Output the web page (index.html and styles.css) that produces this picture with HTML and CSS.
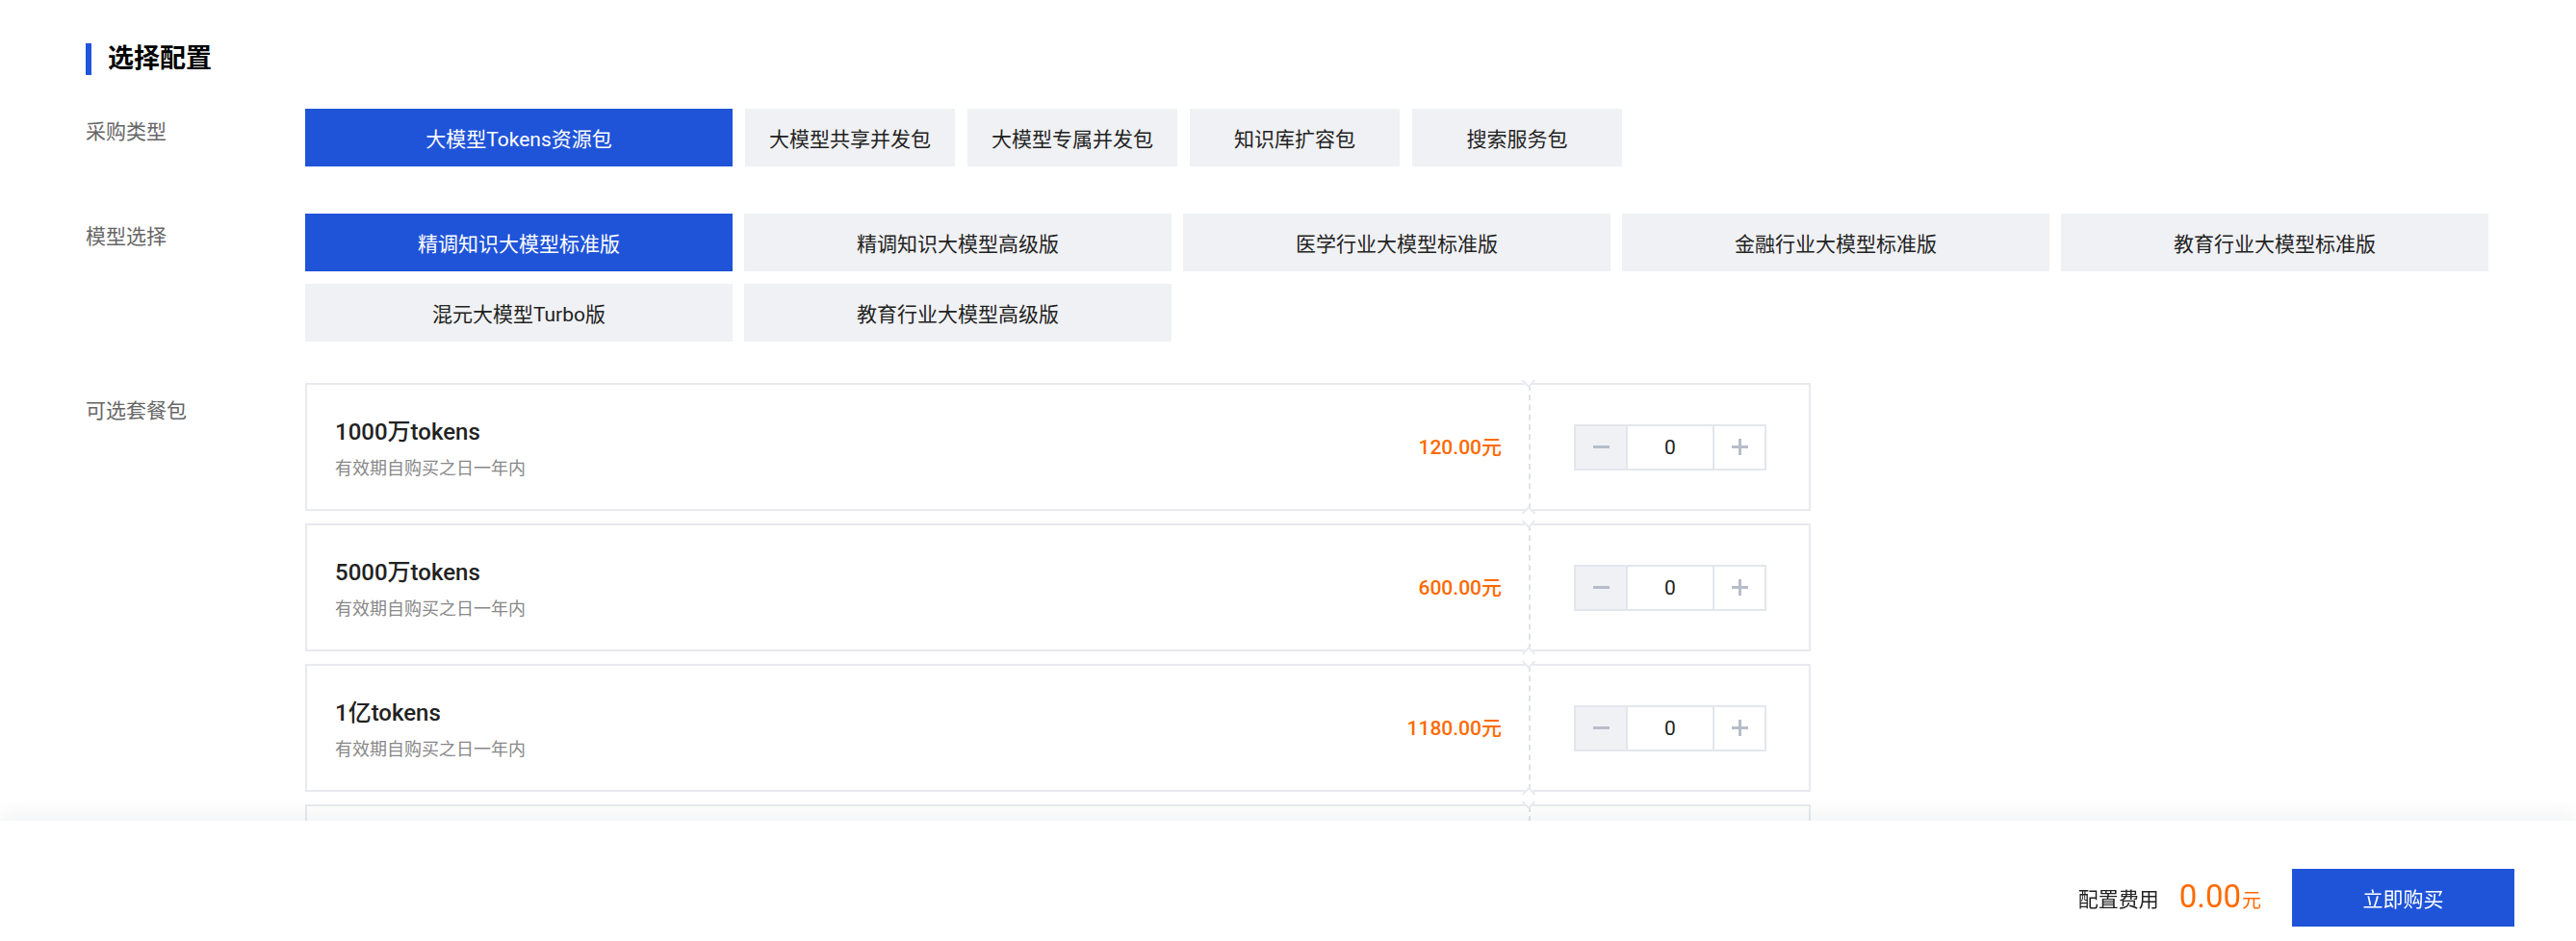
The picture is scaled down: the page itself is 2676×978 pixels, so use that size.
FILE: index.html
```html
<!DOCTYPE html>
<html lang="zh-CN">
<head>
<meta charset="utf-8">
<title>选择配置</title>
<link rel="stylesheet" href="styles.css">
</head>
<body>
<main class="page">
  <div class="section-title">
    <span class="title-bar"></span>
    <h2 class="title-text">选择配置</h2>
  </div>

  <div class="form-row row-type">
    <div class="row-label">采购类型</div>
    <div class="type-options">
      <button class="opt opt-wide is-active">大模型Tokens资源包</button>
      <button class="opt opt-narrow">大模型共享并发包</button>
      <button class="opt opt-narrow">大模型专属并发包</button>
      <button class="opt opt-narrow">知识库扩容包</button>
      <button class="opt opt-narrow">搜索服务包</button>
    </div>
  </div>

  <div class="form-row row-model">
    <div class="row-label">模型选择</div>
    <div class="model-grid">
      <button class="opt is-active">精调知识大模型标准版</button>
      <button class="opt">精调知识大模型高级版</button>
      <button class="opt">医学行业大模型标准版</button>
      <button class="opt">金融行业大模型标准版</button>
      <button class="opt">教育行业大模型标准版</button>
      <button class="opt">混元大模型Turbo版</button>
      <button class="opt">教育行业大模型高级版</button>
    </div>
  </div>

  <div class="form-row row-pkg">
    <div class="row-label label-pkg">可选套餐包</div>
    <div class="pkg-list">
      <div class="pkg-card">
        <div class="pkg-info">
          <div class="pkg-text">
            <div class="pkg-name">1000万tokens</div>
            <div class="pkg-desc">有效期自购买之日一年内</div>
          </div>
          <div class="pkg-price">120.00元</div>
        </div>
        <div class="pkg-qty">
          <div class="stepper">
            <span class="step-btn step-minus is-disabled"><span class="sign-minus"></span></span>
            <span class="step-val">0</span>
            <span class="step-btn step-plus"><span class="sign-plus"></span></span>
          </div>
        </div>
        <span class="notch notch-top"></span>
        <span class="notch notch-bottom"></span>
      </div>

      <div class="pkg-card">
        <div class="pkg-info">
          <div class="pkg-text">
            <div class="pkg-name">5000万tokens</div>
            <div class="pkg-desc">有效期自购买之日一年内</div>
          </div>
          <div class="pkg-price">600.00元</div>
        </div>
        <div class="pkg-qty">
          <div class="stepper">
            <span class="step-btn step-minus is-disabled"><span class="sign-minus"></span></span>
            <span class="step-val">0</span>
            <span class="step-btn step-plus"><span class="sign-plus"></span></span>
          </div>
        </div>
        <span class="notch notch-top"></span>
        <span class="notch notch-bottom"></span>
      </div>

      <div class="pkg-card">
        <div class="pkg-info">
          <div class="pkg-text">
            <div class="pkg-name">1亿tokens</div>
            <div class="pkg-desc">有效期自购买之日一年内</div>
          </div>
          <div class="pkg-price">1180.00元</div>
        </div>
        <div class="pkg-qty">
          <div class="stepper">
            <span class="step-btn step-minus is-disabled"><span class="sign-minus"></span></span>
            <span class="step-val">0</span>
            <span class="step-btn step-plus"><span class="sign-plus"></span></span>
          </div>
        </div>
        <span class="notch notch-top"></span>
        <span class="notch notch-bottom"></span>
      </div>

      <div class="pkg-card">
        <div class="pkg-info">
          <div class="pkg-text">
            <div class="pkg-name">10亿tokens</div>
            <div class="pkg-desc">有效期自购买之日一年内</div>
          </div>
          <div class="pkg-price">11000.00元</div>
        </div>
        <div class="pkg-qty">
          <div class="stepper">
            <span class="step-btn step-minus is-disabled"><span class="sign-minus"></span></span>
            <span class="step-val">0</span>
            <span class="step-btn step-plus"><span class="sign-plus"></span></span>
          </div>
        </div>
        <span class="notch notch-top"></span>
        <span class="notch notch-bottom"></span>
      </div>
    </div>
  </div>
</main>

<footer class="buy-bar">
  <span class="fee-label">配置费用</span>
  <span class="fee-price"><span class="fee-num">0.00</span><span class="fee-unit">元</span></span>
  <button class="buy-btn">立即购买</button>
</footer>
</body>
</html>
```

FILE: styles.css
```css
html, body {
  margin: 0;
  padding: 0;
  overflow: hidden;
  background: #ffffff;
}

body {
  font-family: Roboto, "Noto Sans CJK SC", sans-serif;
  color: #222222;
}

.page {
  padding: 45px 0 0 89px;
}

/* section title */
.section-title {
  display: flex;
  align-items: center;
  height: 33px;
}

.title-bar {
  width: 6px;
  height: 33px;
  background: #1f55da;
}

.title-text {
  margin: 0 0 0 17px;
  font-size: 27px;
  font-weight: 700;
  line-height: 33px;
  color: #000000;
}

/* form rows */
.form-row {
  display: flex;
  align-items: flex-start;
}

.row-type {
  margin-top: 35px;
}

.row-model {
  margin-top: 49px;
}

.row-pkg {
  margin-top: 44px;
}

.row-label {
  width: 228px;
  flex: none;
  font-size: 21px;
  line-height: 48px;
  color: #666666;
}

.label-pkg {
  padding-top: 4px;
}

/* option buttons */
.opt {
  height: 60px;
  border: none;
  margin: 0;
  padding: 0;
  background: #f0f1f4;
  color: #222222;
  font-family: Roboto, "Noto Sans CJK SC", sans-serif;
  font-size: 21px;
  cursor: pointer;
}

.opt.is-active {
  background: #1f54d9;
  color: #ffffff;
}

.type-options {
  display: flex;
  gap: 13px;
}

.opt-wide {
  width: 444px;
}

.opt-narrow {
  width: 218px;
}

.model-grid {
  display: grid;
  grid-template-columns: repeat(5, 444px);
  column-gap: 12px;
  row-gap: 13px;
}

/* package cards */
.pkg-list {
  display: flex;
  flex-direction: column;
  gap: 13px;
  margin-top: -1px;
}

.pkg-card {
  position: relative;
  display: flex;
  width: 1564px;
  height: 133px;
  box-sizing: border-box;
  border: 2px solid #e8eaef;
  background: #ffffff;
}

.pkg-info {
  width: 1271px;
  box-sizing: border-box;
  display: flex;
  align-items: center;
  justify-content: space-between;
  padding: 0 28px 0 29px;
  border-right: 2px dashed #dfe2e8;
}

.pkg-text {
  display: flex;
  flex-direction: column;
  padding-top: 3px;
}

.pkg-name {
  font-size: 24px;
  font-weight: 500;
  line-height: 32px;
  color: #222222;
}

.pkg-desc {
  margin-top: 9px;
  font-size: 18px;
  line-height: 26px;
  color: #888888;
}

.pkg-price {
  font-size: 21px;
  font-weight: 500;
  color: #ff6a00;
  line-height: 30px;
}

.pkg-qty {
  flex: 1;
  display: flex;
  align-items: center;
  padding-left: 45px;
}

.stepper {
  display: flex;
  height: 48px;
  box-sizing: border-box;
  border: 2px solid #e3e6ec;
}

.step-btn {
  position: relative;
  width: 52px;
  display: flex;
  align-items: center;
  justify-content: center;
  background: #ffffff;
}

.step-btn.is-disabled {
  background: #eff1f5;
}

.step-minus {
  border-right: 2px solid #e3e6ec;
}

.step-plus {
  border-left: 2px solid #e3e6ec;
}

.sign-minus {
  display: block;
  width: 17px;
  height: 3px;
  background: #b6bdca;
}

.sign-plus {
  position: relative;
  display: block;
  width: 17px;
  height: 17px;
}

.sign-plus::before,
.sign-plus::after {
  content: "";
  position: absolute;
  background: #b6bdca;
}

.sign-plus::before {
  left: 0;
  top: 7px;
  width: 17px;
  height: 3px;
}

.sign-plus::after {
  left: 7px;
  top: 0;
  width: 3px;
  height: 17px;
}

.step-val {
  width: 88px;
  display: flex;
  align-items: center;
  justify-content: center;
  font-size: 21px;
  color: #222222;
}

/* ticket notches on the divider */
.notch {
  position: absolute;
  left: 1264px;
  width: 8px;
  height: 8px;
  background: #ffffff;
  transform: rotate(45deg);
}

.notch-top {
  top: -9px;
  border-right: 2px solid #e8eaef;
  border-bottom: 2px solid #e8eaef;
}

.notch-bottom {
  bottom: -9px;
  border-left: 2px solid #e8eaef;
  border-top: 2px solid #e8eaef;
}

/* bottom purchase bar */
.buy-bar {
  position: fixed;
  left: 0;
  right: 0;
  bottom: 0;
  height: 125px;
  box-sizing: border-box;
  padding: 50px 64px 0 0;
  display: flex;
  justify-content: flex-end;
  align-items: flex-start;
  background: #ffffff;
  box-shadow: 0 -6px 20px rgba(20, 30, 60, 0.06);
}

.fee-label {
  height: 60px;
  display: flex;
  align-items: center;
  font-size: 21px;
  color: #222222;
  margin-right: 21px;
}

.fee-price {
  height: 60px;
  display: flex;
  align-items: baseline;
  padding-top: 9px;
  box-sizing: border-box;
  color: #ff6a00;
  margin-right: 32px;
}

.fee-num {
  font-size: 33px;
  line-height: 40px;
}

.fee-unit {
  font-size: 20px;
  margin-left: 1px;
}

.buy-btn {
  width: 231px;
  height: 60px;
  border: none;
  margin: 0;
  background: #1f54d9;
  color: #ffffff;
  font-family: Roboto, "Noto Sans CJK SC", sans-serif;
  font-size: 21px;
  cursor: pointer;
}
```
